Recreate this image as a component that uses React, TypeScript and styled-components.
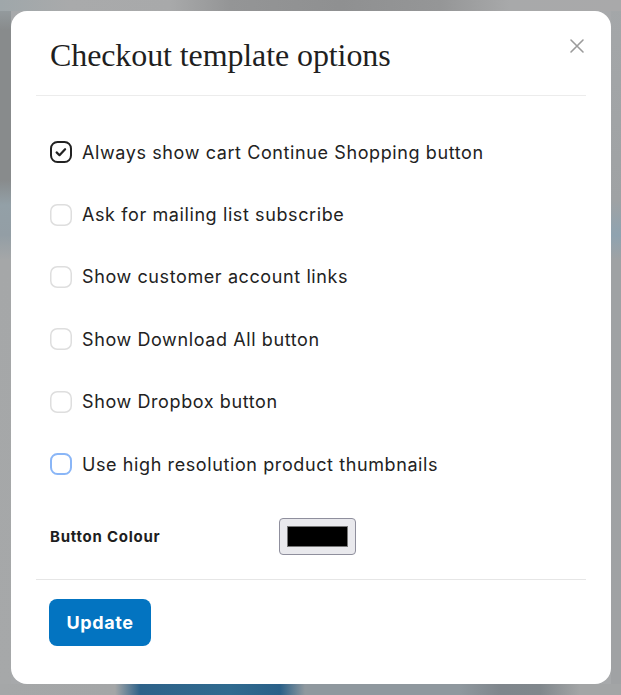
import React from "react";
import styled, { createGlobalStyle } from "styled-components";

const Global = createGlobalStyle`
  html, body { margin: 0; padding: 0; }
  body {
    width: 621px;
    height: 695px;
    overflow: hidden;
    background: #a7a9ab;
    font-family: Inter, "Noto Sans", sans-serif;
  }
`;

const Backdrop = styled.div`
  box-sizing: border-box;
  width: 621px;
  height: 695px;
  padding: 11px 10px 11px 11px;
  display: flex;
  background-repeat: no-repeat;
  background-image:
    linear-gradient(90deg, #9fa7aa 0, #a9aaab 70px, #a8a9aa 170px, #949596 230px, #8f9091 340px, #959697 440px, #a8a9aa 510px, #a9a9aa 100%),
    linear-gradient(90deg, #a5a7a8 0, #a4a6a7 115px, #2e6289 140px, #2f6a8f 230px, #2a6088 280px, #8f989e 305px, #8f989e 460px, #7f868c 500px, #80878c 540px, #a3a5a6 580px, #a3a5a6 100%),
    linear-gradient(180deg, #9aa3a7 0, #888b8c 30px, #888b8c 180px, #93a0a7 205px, #939ea5 235px, #a5a7a8 260px, #a6a8a9 100%),
    linear-gradient(180deg, #a4a7a9 0, #9fa2a4 200px, #8fa3b0 235px, #9fa2a4 260px, #a0a2a4 100%);
  background-size: 621px 11px, 621px 11px, 11px 695px, 10px 695px;
  background-position: 0 0, 0 684px, 0 0, 611px 0;
`;

const Modal = styled.div`
  box-sizing: border-box;
  width: 600px;
  height: 673px;
  background: #ffffff;
  border-radius: 16px;
  padding: 0 25px;
  display: flex;
  flex-direction: column;
`;

const Header = styled.header`
  height: 84px;
  display: flex;
  align-items: center;
  justify-content: space-between;
  padding: 0 0 0 14px;
  border-bottom: 1px solid #ececec;
`;

const Title = styled.h2`
  margin: 0;
  font-family: "Liberation Serif", "Times New Roman", serif;
  font-weight: 400;
  font-size: 32px;
  color: #1f1f1f;
  letter-spacing: -0.1px;
  transform: translateY(2px);
`;

const CloseButton = styled.button`
  border: 0;
  background: none;
  padding: 0;
  width: 18px;
  height: 18px;
  display: flex;
  align-items: center;
  justify-content: center;
  cursor: pointer;
  transform: translate(0px, -7px);
`;

const Body = styled.div`
  padding: 25px 14px 0 13px;
  display: flex;
  flex-direction: column;
`;

const OptionRow = styled.label`
  height: 62.4px;
  display: flex;
  align-items: center;
  gap: 9px;
  font-size: 18px;
  letter-spacing: 0.6px;
  color: #222222;
  cursor: pointer;
`;

const ColourRow = styled.div`
  margin-top: 21px;
  height: 40px;
  display: flex;
  align-items: center;
  padding-left: 1px;
`;

const ColourLabel = styled.span`
  width: 229px;
  font-size: 15px;
  font-weight: 700;
  letter-spacing: 0.75px;
  color: #1e1e1e;
`;

const ColourInput = styled.div`
  box-sizing: border-box;
  width: 77px;
  height: 37px;
  border: 1px solid #8f8f9d;
  border-radius: 4px;
  background: #e9e9ed;
  padding: 7px 7px;
  display: flex;
`;

const Swatch = styled.div<{ $color: string }>`
  flex: 1;
  background: ${(p) => p.$color};
  border: 1px solid #777;
`;

const Footer = styled.footer`
  margin-top: 23px;
  border-top: 1px solid #e6e6e6;
  padding: 19px 13px 0;
`;

const UpdateButton = styled.button`
  width: 102px;
  height: 47px;
  border: 0;
  border-radius: 8px;
  background: #0374c1;
  color: #ffffff;
  font-family: Inter, "Noto Sans", sans-serif;
  font-size: 18px;
  font-weight: 700;
  letter-spacing: 0.6px;
  cursor: pointer;
`;

type BoxState = "checked" | "unchecked" | "focus";

const CheckBox = ({ state }: { state: BoxState }) => {
  const stroke =
    state === "checked" ? "#222222" : state === "focus" ? "#8ab6f7" : "#dedede";
  const sw = state === "unchecked" ? 1.5 : 2;
  return (
    <svg width="24" height="24" viewBox="0 0 24 24" style={{ flex: "none" }}>
      <rect x={1 + sw / 2} y={1 + sw / 2} width={22 - sw} height={22 - sw} rx="6.5" fill="#fff" stroke={stroke} strokeWidth={sw} />
      {state === "checked" && (
        <path d="M7.6 12.4l2.9 2.8 5.6-6" fill="none" stroke="#222" strokeWidth="2.2" strokeLinecap="round" strokeLinejoin="round" />
      )}
    </svg>
  );
};

const options: { label: string; state: BoxState }[] = [
  { label: "Always show cart Continue Shopping button", state: "checked" },
  { label: "Ask for mailing list subscribe", state: "unchecked" },
  { label: "Show customer account links", state: "unchecked" },
  { label: "Show Download All button", state: "unchecked" },
  { label: "Show Dropbox button", state: "unchecked" },
  { label: "Use high resolution product thumbnails", state: "focus" },
];

export default function App() {
  return (
    <>
      <Global />
      <Backdrop>
        <Modal>
          <Header>
            <Title>Checkout template options</Title>
            <CloseButton aria-label="Close">
              <svg width="16" height="16" viewBox="0 0 16 16">
                <path d="M2 2l12 12M14 2L2 14" stroke="#9b9b9b" strokeWidth="1.6" strokeLinecap="round" />
              </svg>
            </CloseButton>
          </Header>
          <Body>
            {options.map((o) => (
              <OptionRow key={o.label}>
                <CheckBox state={o.state} />
                {o.label}
              </OptionRow>
            ))}
            <ColourRow>
              <ColourLabel>Button Colour</ColourLabel>
              <ColourInput>
                <Swatch $color="#000000" />
              </ColourInput>
            </ColourRow>
          </Body>
          <Footer>
            <UpdateButton>Update</UpdateButton>
          </Footer>
        </Modal>
      </Backdrop>
    </>
  );
}
